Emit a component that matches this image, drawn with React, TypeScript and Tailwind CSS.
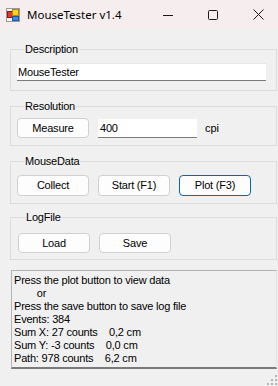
import React from "react";

const font = { fontFamily: '"Liberation Sans", Arial, sans-serif' };

const AppIcon = () => (
  <svg width="14" height="14" viewBox="0 0 14 14">
    <rect x="0.5" y="0.5" width="13" height="13" fill="#f4f4f4" stroke="#9a9a9a" />
    <rect x="1.5" y="3.5" width="5" height="6" fill="#e23a2a" stroke="#8a1a10" />
    <rect x="6.5" y="1.5" width="6" height="6" fill="#ffd21c" stroke="#b08a00" />
    <rect x="6.5" y="8.5" width="6" height="4" fill="#3a8ee6" stroke="#1a5aa0" />
  </svg>
);

const Group = ({
  title,
  className,
  children,
}: {
  title: string;
  className: string;
  children: React.ReactNode;
}) => (
  <fieldset className={`mx-[10px] mr-[1px] border border-[#dcdcdc] ${className}`}>
    <legend className="ml-[7px] px-[1px] text-[11px] leading-[13px] tracking-[-0.2px] text-black">
      {title}
    </legend>
    {children}
  </fieldset>
);

const Btn = ({ label, focused = false }: { label: string; focused?: boolean }) => (
  <button
    className={`w-[72px] rounded-[4px] border bg-[#fdfdfd] text-[11px] tracking-[-0.2px] text-black ${
      focused ? "border-[#0067c0]" : "border-[#d0d0d0]"
    }`}
  >
    {label}
  </button>
);

const lines = [
  "Press the plot button to view data",
  "        or",
  "Press the save button to save log file",
  "Events: 384",
  "Sum X: 27 counts    0,2 cm",
  "Sum Y: -3 counts    0,0 cm",
  "Path: 978 counts    6,2 cm",
];

export default function App() {
  return (
    <div className="flex h-[386px] w-[278px] flex-col bg-[#f0f0f0]" style={font}>
      {/* Title bar */}
      <div className="flex h-[29px] items-center bg-[#f6eeee]">
        <div className="ml-[6px] flex items-center">
          <AppIcon />
        </div>
        <span
          className="ml-[7px] text-[11.5px] text-black"
          style={{ fontFamily: '"Noto Sans", "Open Sans", sans-serif' }}
        >
          MouseTester v1.4
        </span>
        <div className="ml-auto flex h-full">
          <div className="flex w-[45px] items-center justify-center">
            <svg width="10" height="10" viewBox="0 0 10 10">
              <line x1="0" y1="5.5" x2="10" y2="5.5" stroke="#1a1a1a" strokeWidth="1" />
            </svg>
          </div>
          <div className="flex w-[45px] items-center justify-center">
            <svg width="10" height="10" viewBox="0 0 10 10">
              <rect x="0.5" y="0.5" width="9" height="9" rx="1" fill="none" stroke="#1a1a1a" strokeWidth="1" />
            </svg>
          </div>
          <div className="flex w-[43px] items-center pl-[18px]">
            <svg width="11" height="11" viewBox="0 0 11 11">
              <path d="M0.5 0.5 L10.5 10.5 M10.5 0.5 L0.5 10.5" stroke="#1a1a1a" strokeWidth="1" />
            </svg>
          </div>
        </div>
      </div>

      <Group title="Description" className="mt-[14px] pb-[9px] pl-[6px] pr-[10px] pt-[7px]">
        <div className="h-[18px] border-b border-t border-t-[#e6e6e6] border-b-[#7a7a7a] bg-white pl-[1px] text-[11px] leading-[17px] tracking-[-0.2px] text-black">
          MouseTester
        </div>
      </Group>

      <Group title="Resolution" className="mt-[9px] pb-[7px] pl-[6px] pt-[5px]">
        <div className="flex h-[20px] items-center">
          <div className="flex h-full">
            <Btn label="Measure" />
          </div>
          <div className="ml-[9px] mt-[1px] h-[19px] w-[99px] border-b border-b-[#7a7a7a] bg-white pl-[2px] text-[11px] leading-[18px] tracking-[-0.2px] text-black">
            400
          </div>
          <span className="ml-[8px] text-[11px] text-black">cpi</span>
        </div>
      </Group>

      <Group title="MouseData" className="mt-[9px] pb-[7px] pl-[6px] pt-[7px]">
        <div className="flex h-[21px] gap-[9px]">
          <Btn label="Collect" />
          <Btn label="Start (F1)" />
          <Btn label="Plot (F3)" focused />
        </div>
      </Group>

      <Group title="LogFile" className="mt-[7px] pb-[6px] pl-[7px] pt-[9px]">
        <div className="flex h-[20px] gap-[9px]">
          <Btn label="Load" />
          <Btn label="Save" />
        </div>
      </Group>

      <div className="ml-[11px] mr-[1px] mt-[10px] h-[99px] border-l border-r border-t border-b-2 border-l-[#b4b4b4] border-r-[#e4e4e4] border-t-[#b4b4b4] border-b-[#7a7a7a] pl-[2px] pt-[3px]">
        {lines.map((l, i) => (
          <div key={i} className="whitespace-pre text-[11px] leading-[13px] tracking-[-0.2px] text-black">
            {l}
          </div>
        ))}
      </div>

      <div className="mt-auto flex justify-end pb-[1px] pr-[1px]">
        <svg width="10" height="10" viewBox="0 0 10 10">
          <rect x="8" y="0" width="2" height="2" fill="#b4b4b4" />
          <rect x="4" y="4" width="2" height="2" fill="#b4b4b4" />
          <rect x="8" y="4" width="2" height="2" fill="#b4b4b4" />
          <rect x="0" y="8" width="2" height="2" fill="#b4b4b4" />
          <rect x="4" y="8" width="2" height="2" fill="#b4b4b4" />
          <rect x="8" y="8" width="2" height="2" fill="#b4b4b4" />
        </svg>
      </div>
    </div>
  );
}
